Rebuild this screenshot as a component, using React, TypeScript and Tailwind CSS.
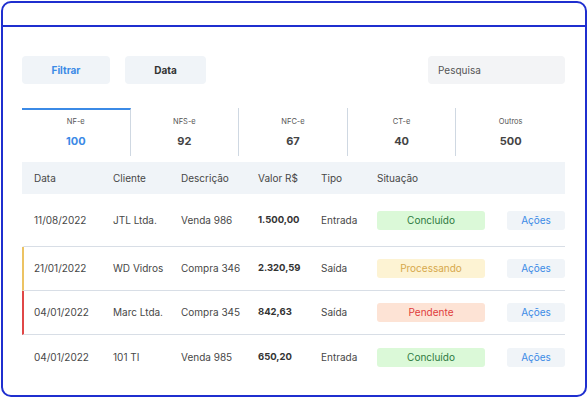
import React from "react";

type Row = {
  data: string;
  cliente: string;
  desc: string;
  valor: string;
  tipo: string;
  status: "ok" | "proc" | "pend";
  bar?: string;
};

const tabs = [
  { label: "NF-e", n: "100" },
  { label: "NFS-e", n: "92" },
  { label: "NFC-e", n: "67" },
  { label: "CT-e", n: "40" },
  { label: "Outros", n: "500" },
];

const rows: Row[] = [
  { data: "11/08/2022", cliente: "JTL Ltda.", desc: "Venda 986", valor: "1.500,00", tipo: "Entrada", status: "ok" },
  { data: "21/01/2022", cliente: "WD Vidros", desc: "Compra 346", valor: "2.320,59", tipo: "Saída", status: "proc", bar: "yellow" },
  { data: "04/01/2022", cliente: "Marc Ltda.", desc: "Compra 345", valor: "842,63", tipo: "Saída", status: "pend", bar: "red" },
  { data: "04/01/2022", cliente: "101 TI", desc: "Venda 985", valor: "650,20", tipo: "Entrada", status: "ok" },
];

function Badge({ s }: { s: Row["status"] }) {
  if (s === "proc")
    return (
      <div className="h-[19px] rounded-[3px] bg-[#fdf3d3] text-[#d6a84c] flex items-center justify-center">
        Processando
      </div>
    );
  if (s === "pend")
    return (
      <div className="h-[19px] rounded-[3px] bg-[#fde3d5] text-[#e03c3c] flex items-center justify-center">
        Pendente
      </div>
    );
  return (
    <div className="h-[19px] rounded-[3px] bg-[#dbf9d8] text-[#2e7a3f] flex items-center justify-center">
      Concluído
    </div>
  );
}

const grid = "grid grid-cols-[79px_68px_77px_63px_56px_108px_1fr_58px] items-center";

export default function App() {
  return (
    <div className="w-[588px] h-[400px] bg-white p-px font-['Inter',sans-serif] text-[#474747] text-[10px]">
      <div className="h-[396px] border-2 border-[#1f2fcf] rounded-[10px] flex flex-col">
        <div className="h-[24px] border-b-2 border-[#1f2fcf]" />
        <div className="pl-[19px] pr-[20px] pt-[29px]">
          {/* filtros */}
          <div className="flex items-center">
            <button className="w-[88px] h-[28px] rounded-[4px] bg-[#f0f4f8] text-[#3b8ae6] font-bold">
              Filtrar
            </button>
            <button className="ml-[15px] w-[81px] h-[28px] rounded-[4px] bg-[#f0f4f8] text-[#333] font-bold">
              Data
            </button>
            <div className="ml-auto w-[137px] h-[28px] rounded-[4px] bg-[#f3f4f6] text-[#555] flex items-center pl-[10px]">
              Pesquisa
            </div>
          </div>

          {/* abas */}
          <div className="mt-[24px] grid grid-cols-5 h-[48px]">
            {tabs.map((t, i) => (
              <div
                key={t.label}
                className={
                  "flex flex-col items-center " +
                  (i === 0 ? "border-t-2 border-[#3b8ae6] pt-[7px] " : "pt-[9px] ") +
                  (i < 4 ? "border-r border-r-[#cfd8e2]" : "")
                }
              >
                <div className="text-[7.5px] text-[#555] leading-[10px]">{t.label}</div>
                <div
                  className={
                    "mt-[7px] text-[11px] font-bold leading-[14px] " +
                    (i === 0 ? "text-[#3b8ae6]" : "text-[#444]")
                  }
                >
                  {t.n}
                </div>
              </div>
            ))}
          </div>

          {/* tabela */}
          <div className={grid + " mt-[6px] h-[32px] bg-[#f0f4f8] pl-3"}>
            <div>Data</div>
            <div>Cliente</div>
            <div>Descrição</div>
            <div>Valor R$</div>
            <div>Tipo</div>
            <div>Situação</div>
            <div />
            <div />
          </div>
          {rows.map((r, i) => (
            <div
              key={i}
              className={
                grid +
                " pl-[10px] border-l-2 " +
                (i === 0 ? "h-[53px] " : "h-[44px] ") +
                (i < 3 ? "border-b border-b-[#d8dee6] " : "") +
                (r.bar === "yellow"
                  ? "border-l-[#ecc363]"
                  : r.bar === "red"
                  ? "border-l-[#e04747]"
                  : "border-l-transparent")
              }
            >
              <div>{r.data}</div>
              <div>{r.cliente}</div>
              <div>{r.desc}</div>
              <div className="font-bold text-[9.5px] text-[#333]">{r.valor}</div>
              <div>{r.tipo}</div>
              <Badge s={r.status} />
              <div />
              <div className="h-[19px] rounded-[3px] bg-[#f0f4f8] text-[#3b8ae6] flex items-center justify-center">
                Ações
              </div>
            </div>
          ))}
        </div>
      </div>
    </div>
  );
}
